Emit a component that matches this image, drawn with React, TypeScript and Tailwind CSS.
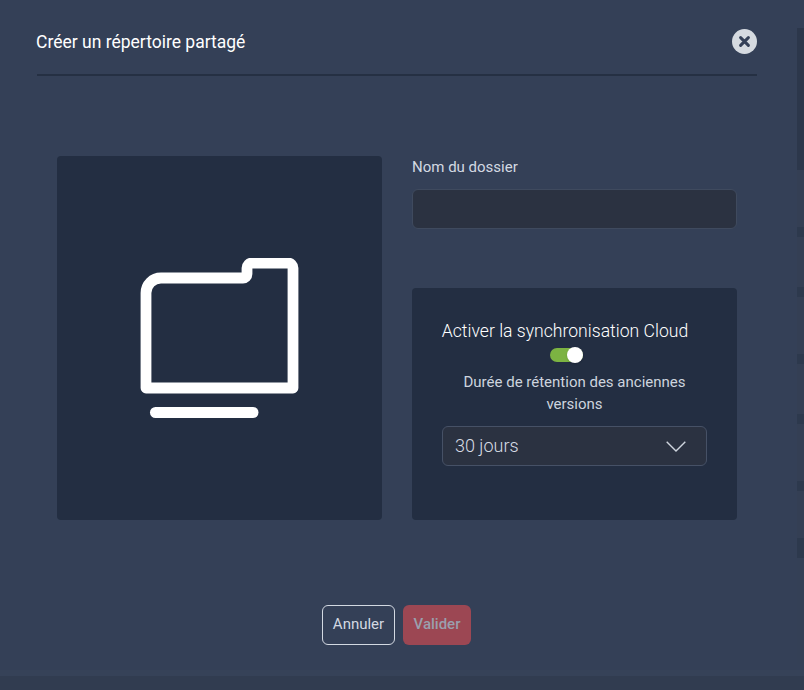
export default function App() {
  const font = { fontFamily: "Roboto, sans-serif" };
  const marks = [
    ["h-[142px] mt-[28px]", "bg-[#2c374b]"],
    ["h-[57px]", "bg-[#343f54]"],
    ["h-[10px]", "bg-[#2d394d]"],
    ["h-[50px]", "bg-[#343f54]"],
    ["h-[10px]", "bg-[#2d394d]"],
    ["h-[57px]", "bg-[#343f54]"],
    ["h-[10px]", "bg-[#2d394d]"],
    ["h-[50px]", "bg-[#343f54]"],
    ["h-[10px]", "bg-[#2d394d]"],
    ["h-[57px]", "bg-[#343f54]"],
    ["h-[10px]", "bg-[#2d394d]"],
    ["h-[47px]", "bg-[#343f54]"],
    ["h-[20px]", "bg-[#2d394d]"],
    ["h-[106px]", "bg-[#344056]"],
  ];
  return (
    <div className="relative w-[804px] h-[690px] overflow-hidden bg-[#344057] flex font-['Roboto',sans-serif]" style={font}>
      <div className="w-[797px] h-[690px] flex flex-col shrink-0">
        <header className="ml-[37px] w-[720px] h-[45px] mt-[29px] flex items-start justify-between border-b-2 border-[#253043] box-content pb-0">
          <h1 className="pt-px -ml-px text-[17.5px] leading-[25px] font-normal text-white">Créer un répertoire partagé</h1>
          <button className="w-[25px] h-[25px] rounded-full bg-[#d5dae0] flex items-center justify-center">
            <svg width="13" height="13" viewBox="0 0 13 13" fill="none">
              <path d="M2.6 2.6 10.4 10.4M10.4 2.6 2.6 10.4" stroke="#344057" strokeWidth="3" strokeLinecap="round" />
            </svg>
          </button>
        </header>
        <main className="ml-[57px] mt-[80px] flex gap-[30px] h-[364px]">
          <div className="w-[325px] rounded bg-[#232e42] flex items-center justify-center">
            <svg width="160" height="160" viewBox="140 258 160 160" fill="none">
              <path d="M146 388V293a15 15 0 0 1 15-15H243a4 4 0 0 0 4-4V268a5 5 0 0 1 5-5H288a5 5 0 0 1 5 5V388Z" stroke="#fff" strokeWidth="10.8" strokeLinejoin="round" />
              <rect x="150" y="407" width="108.5" height="11" rx="5.5" fill="#fff" />
            </svg>
          </div>
          <div className="w-[325px] flex flex-col">
            <label className="text-[15px] leading-[22px] text-[#d3d9e2]">Nom du dossier</label>
            <input className="mt-[11px] h-10 rounded-md border border-[#3f4a5e] bg-[#2b3241] outline-none" />
            <section className="mt-[59px] h-[232px] rounded bg-[#232e42] px-[30px] pt-[30px] flex flex-col items-center text-center">
              <div className="self-start w-[246px] flex flex-col items-center">
                <p className="text-[17.6px] leading-[26px] font-light text-white whitespace-nowrap">Activer la synchronisation Cloud</p>
                <span className="relative mt-[4px] ml-[2px] w-[33px] h-[14px] rounded-full bg-[#7cb342] block shrink-0">
                  <span className="absolute right-0 -top-px w-[16px] h-[16px] rounded-full bg-white shadow" />
                </span>
              </div>
              <p className="mt-[9px] text-[15px] leading-[22px] text-[#cdd4de]">Durée de rétention des anciennes versions</p>
              <div className="mt-[11px] w-full h-10 rounded-md border border-[#465166] bg-[#2b3241] pl-3 pr-5 flex items-center justify-between">
                <span className="text-lg font-light text-[#d7dce4]">30 jours</span>
                <svg width="20" height="11" viewBox="0 0 20 11" fill="none">
                  <path d="M.7.7 10 10 19.3.7" stroke="#cfd5de" strokeWidth="1.4" />
                </svg>
              </div>
            </section>
          </div>
        </main>
        <footer className="ml-[322px] mt-[85px] flex gap-2 text-[15px] leading-none font-normal">
          <button className="w-[73px] h-10 pb-[2px] rounded-md border border-[#d3d9e2] text-[#d3d9e2]">Annuler</button>
          <button className="w-[68px] h-10 pb-[2px] rounded-md bg-[#9c4753] text-[#9a9fad] font-medium">Valider</button>
        </footer>
      </div>
      <aside className="w-[7px] flex flex-col shrink-0">
        {marks.map(([h, c], i) => (
          <div key={i} className={h + " " + c} />
        ))}
      </aside>
      <div className="absolute left-0 right-0 bottom-0 h-[20px] bg-[#364258]">
        <div className="mt-[6px] h-[14px] bg-[#313c50]" />
      </div>
    </div>
  );
}
